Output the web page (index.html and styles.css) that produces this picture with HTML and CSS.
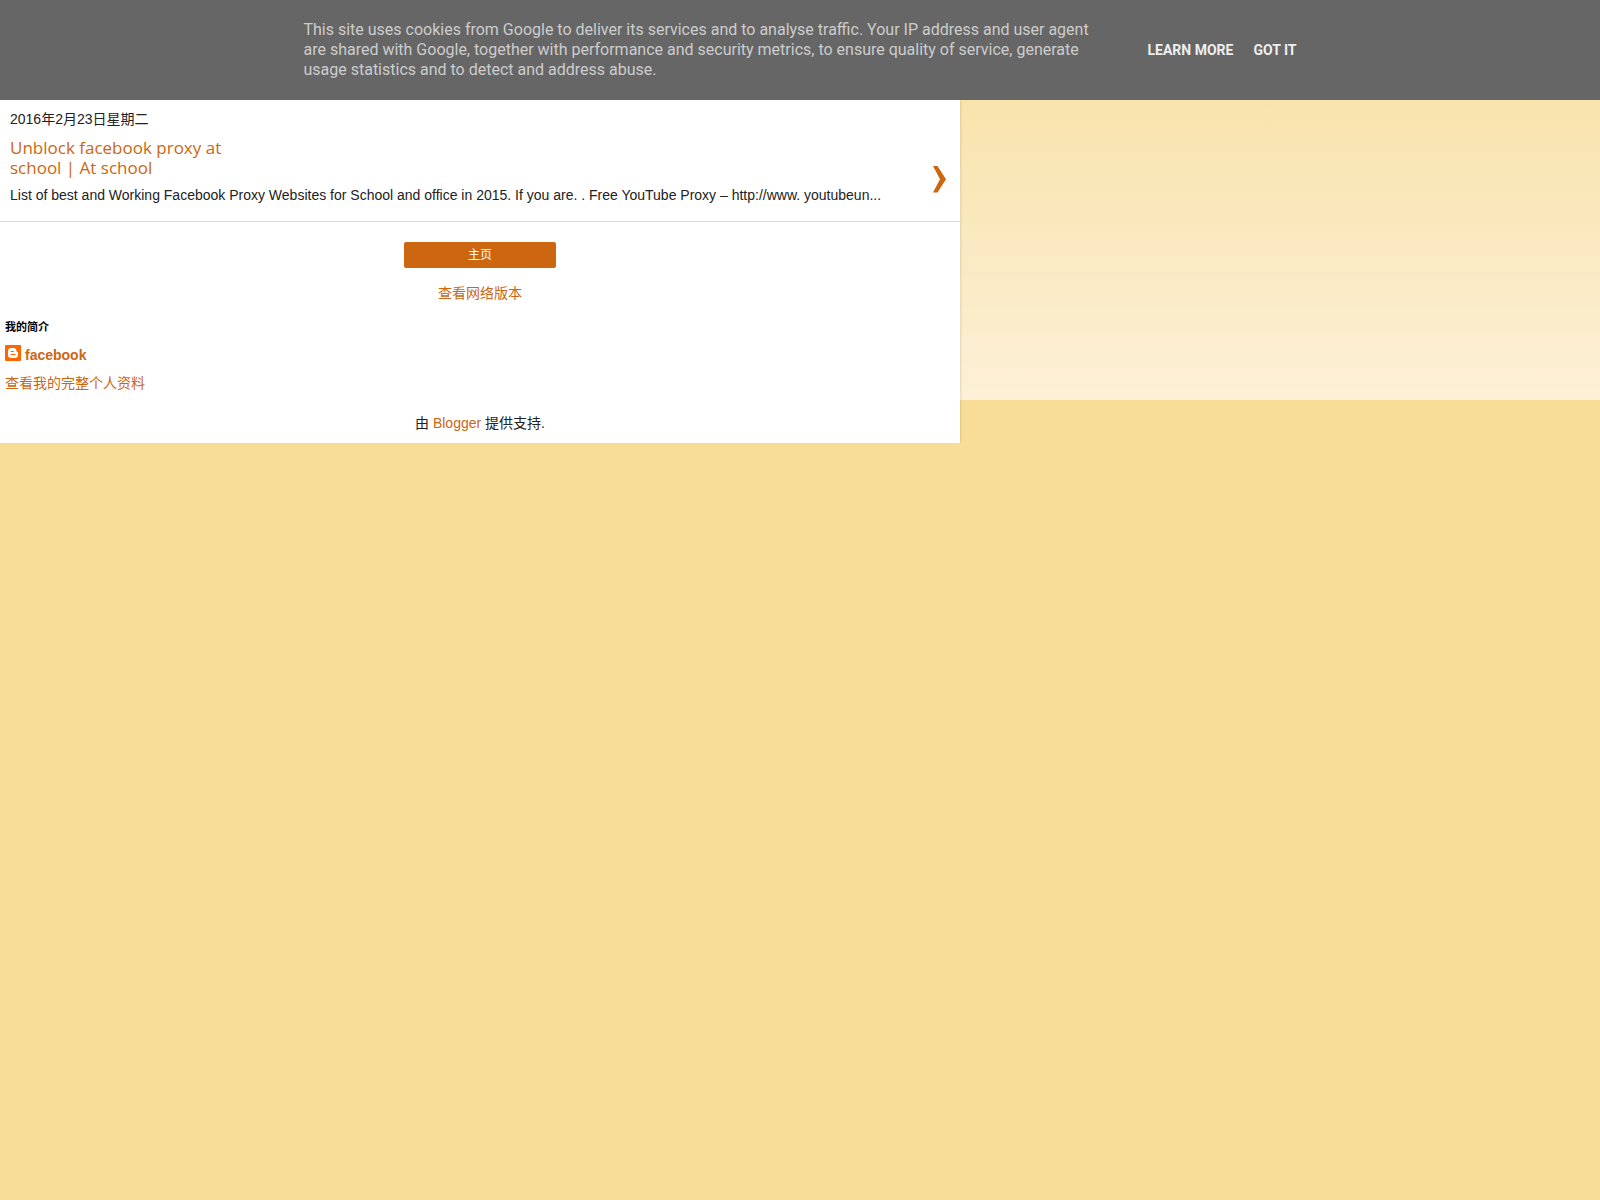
FILE: index.html
```html
<!DOCTYPE html>
<html lang="zh-CN">
<head>
    <meta charset="UTF-8">
    <meta name="viewport" content="width=device-width, initial-scale=1">
    <title>facebook</title>
    <link rel="stylesheet" href="styles.css">
</head>
<body>

<div class="cookie-bar" lang="en">
    <p class="cookie-text">This site uses cookies from Google to deliver its services and to analyse traffic. Your IP address and user agent are shared with Google, together with performance and security metrics, to ensure quality of service, generate usage statistics and to detect and address abuse.</p>
    <div class="cookie-buttons">
        <a href="#">Learn more</a>
        <a href="#">Got it</a>
    </div>
</div>

<div class="content">
    <main>
        <article class="post">
            <div class="post-text">
                <h2 class="date">2016年2月23日星期二</h2>
                <h3 class="post-title"><a href="#">Unblock facebook proxy at school | At school</a></h3>
                <p class="snippet">List of best and Working Facebook Proxy Websites for School and office in 2015. If you are. . Free YouTube Proxy – http://www. youtubeun...</p>
            </div>
            <a class="arrow" href="#" aria-label="Unblock facebook proxy at school">
                <svg width="14" height="28" viewBox="0 0 14 28"><path d="M1 1h4.500L14 14.300 5.500 27.500H1L8 14.300z"/></svg>
            </a>
        </article>

        <nav class="pager">
            <a class="home-link" href="#">主页</a>
            <a class="web-link" href="#">查看网络版本</a>
        </nav>
    </main>

    <section class="profile">
        <h2>我的简介</h2>
        <a class="profile-name" href="#">
            <svg width="16" height="16" viewBox="0 0 16 16">
                <rect width="16" height="16" rx="1" fill="#ff6600"/>
                <path fill="#fff" d="M6 3h2.500C10.200 3 11.500 4.300 11.500 6c0 .9.400 1 1.500 1v3c0 1.700-1.300 3-3 3H6c-1.700 0-3-1.300-3-3V6c0-1.700 1.300-3 3-3z"/>
                <path stroke="#ff6600" stroke-linecap="round" d="M6 6.500h2.500M6 9.500h4"/>
            </svg>
            facebook
        </a>
        <a class="profile-link" href="#">查看我的完整个人资料</a>
    </section>

    <footer>由 <a href="#">Blogger</a> 提供支持.</footer>
</div>

</body>
</html>
```
FILE: styles.css
```css
body {
    margin: 0;
    font-family: "Liberation Sans", Arial, "Noto Sans CJK SC", sans-serif;
    font-size: 14px;
    line-height: 20px;
    color: #222;
    background: #f7dd97 linear-gradient(#f8df9f, #fcf0d6) no-repeat 0 0 / 100% 400px;
}
a {
    color: #cc6611;
    text-decoration: none;
}
h2, h3, p {
    margin: 0;
}
.cookie-bar {
    position: relative;
    z-index: 1;
    display: flex;
    justify-content: center;
    align-items: center;
    gap: 48px;
    padding: 20px;
    background-color: #666;
    font-family: Roboto, sans-serif;
}
.cookie-text {
    max-width: 796px;
    font-size: 16px;
    color: #ccc;
}
.cookie-buttons {
    display: flex;
    gap: 20px;
}
.cookie-buttons a {
    color: #eee;
    font-weight: bold;
    text-transform: uppercase;
    white-space: nowrap;
}
.content {
    width: 60%;
    background-color: #fff;
    box-shadow: 0 0 3px rgba(0, 0, 0, 0.2);
}
.post {
    display: flex;
    justify-content: space-between;
    align-items: flex-end;
    padding: 9px 14px 16px 10px;
    border-bottom: 1px solid #ddd;
}
.date {
    font-size: 14px;
    font-weight: normal;
}
.post-title {
    width: 220px;
    margin: 9px 0 7px;
    font: 17px/20px "Trebuchet MS", "Open Sans", sans-serif;
}
.arrow {
    display: flex;
    margin-bottom: 12px;
}
.arrow svg {
    fill: #cc6611;
}
.pager {
    display: flex;
    flex-direction: column;
    align-items: center;
    gap: 15px;
    padding-top: 20px;
}
.home-link {
    width: 152px;
    border-radius: 2px;
    background-color: #cc6611;
    color: #fff;
    font-size: 12px;
    line-height: 26px;
    text-align: center;
}
.profile {
    display: flex;
    flex-direction: column;
    align-items: flex-start;
    gap: 8px;
    padding: 14px 5px 0;
}
.profile h2 {
    font-size: 11px;
    color: #000;
}
.profile-name {
    display: flex;
    gap: 4px;
    font-weight: bold;
}
footer {
    padding: 20px 0 10px;
    text-align: center;
}
```
